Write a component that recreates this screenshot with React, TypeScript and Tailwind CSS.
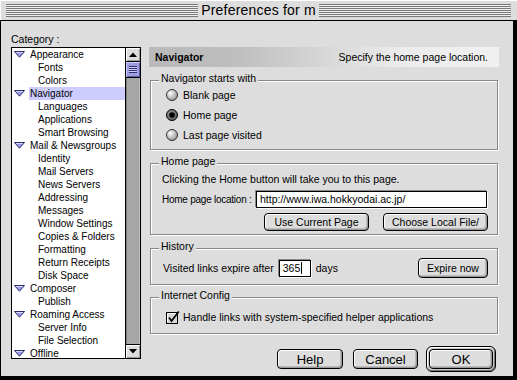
import React from "react";

type Item = { label: string; top?: boolean; selected?: boolean };

const items: Item[] = [
  { label: "Appearance", top: true },
  { label: "Fonts" },
  { label: "Colors" },
  { label: "Navigator", top: true, selected: true },
  { label: "Languages" },
  { label: "Applications" },
  { label: "Smart Browsing" },
  { label: "Mail & Newsgroups", top: true },
  { label: "Identity" },
  { label: "Mail Servers" },
  { label: "News Servers" },
  { label: "Addressing" },
  { label: "Messages" },
  { label: "Window Settings" },
  { label: "Copies & Folders" },
  { label: "Formatting" },
  { label: "Return Receipts" },
  { label: "Disk Space" },
  { label: "Composer", top: true },
  { label: "Publish" },
  { label: "Roaming Access", top: true },
  { label: "Server Info" },
  { label: "File Selection" },
  { label: "Offline", top: true },
];

function Tri() {
  return (
    <svg width="11" height="7" viewBox="0 0 11 7" className="shrink-0">
      <polygon points="0.5,0.5 10.5,0.5 5.5,6.2" fill="#9a9aee" stroke="#2e2e66" strokeWidth="1" />
      <line x1="2" y1="1.5" x2="9" y2="1.5" stroke="#d4d4ff" strokeWidth="1" />
    </svg>
  );
}

function Radio({ on }: { on?: boolean }) {
  return (
    <svg width="12" height="12" viewBox="0 0 12 12" className="shrink-0">
      <defs>
        <radialGradient id="rg" cx="35%" cy="35%" r="75%">
          <stop offset="0" stopColor="#ffffff" />
          <stop offset="1" stopColor="#8a8a8a" />
        </radialGradient>
        <radialGradient id="rgon" cx="35%" cy="35%" r="75%">
          <stop offset="0" stopColor="#9a9a9a" />
          <stop offset="1" stopColor="#555555" />
        </radialGradient>
      </defs>
      <circle cx="6" cy="6" r="5.5" fill={on ? "url(#rgon)" : "url(#rg)"} stroke={on ? "#000" : "#333"} strokeWidth="1" />
      {on && <circle cx="6" cy="6" r="2.8" fill="#000" />}
    </svg>
  );
}

function Check() {
  return (
    <svg width="14" height="13" viewBox="0 0 14 13" className="shrink-0">
      <rect x="0.5" y="1.5" width="11" height="11" fill="#d6d6d6" stroke="#000" />
      <line x1="1.5" y1="2.5" x2="10.5" y2="2.5" stroke="#fff" />
      <line x1="1.5" y1="2.5" x2="1.5" y2="11.5" stroke="#fff" />
      <path d="M3 6.5 L5.5 10 L12.8 0.5" stroke="#000" strokeWidth="1.7" fill="none" />
    </svg>
  );
}

function Group({ title, className, children }: { title: string; className?: string; children: React.ReactNode }) {
  return (
    <div className={`relative mx-[1px] border border-[#888] shadow-[1px_1px_0_#fff,inset_1px_1px_0_#fff] ${className ?? ""}`}>
      <span className="absolute left-[8px] -top-[9px] bg-[#dddddd] px-[2px] leading-[13px] whitespace-nowrap">{title}</span>
      {children}
    </div>
  );
}

function Btn({ children, className }: { children: React.ReactNode; className?: string }) {
  return (
    <div
      className={`flex items-center justify-center border border-black rounded-[4px] bg-[#dddddd] shadow-[inset_1px_1px_0_#fff,inset_-1px_-1px_0_#999,inset_-2px_-2px_0_#bbb] whitespace-nowrap ${className ?? ""}`}
    >
      {children}
    </div>
  );
}

function ArrowBox({ up }: { up?: boolean }) {
  return (
    <div className={`h-[13px] shrink-0 flex items-center justify-center bg-[#dddddd] shadow-[inset_1px_1px_0_#fff,inset_-1px_-1px_0_#999] ${up ? "border-b" : "border-t"} border-black box-content`}>
      <svg width="8" height="5" viewBox="0 0 8 5">
        {up ? <polygon points="0,5 8,5 4,0.5" fill="#000" /> : <polygon points="0,0 8,0 4,4.5" fill="#000" />}
      </svg>
    </div>
  );
}

export default function App() {
  return (
    <div className="w-[517px] h-[380px] bg-black overflow-hidden text-black font-['Liberation_Sans',Arial,sans-serif] text-[10.5px] leading-[13px]">
      {/* Title bar */}
      <div className="h-[21px] w-[517px] bg-[#dddddd] border-b border-black shadow-[inset_0_1px_0_#fff,inset_1px_0_0_#fff] flex items-center px-[6px]">
        <div className="flex-1 h-[13px] bg-[repeating-linear-gradient(to_bottom,#7a7a7a_0px,#7a7a7a_1px,#eeeeee_1px,#eeeeee_2px)]" />
        <div className="px-[3px] text-[14px] leading-[16px] tracking-[0.2px]">Preferences for m</div>
        <div className="flex-1 h-[13px] bg-[repeating-linear-gradient(to_bottom,#7a7a7a_0px,#7a7a7a_1px,#eeeeee_1px,#eeeeee_2px)]" />
      </div>

      {/* Body */}
      <div className="w-[513px] h-[355px] bg-[#dddddd] border-l border-black flex">
        {/* Left column */}
        <div className="w-[140px] shrink-0 pt-[12px] pl-[10px] flex flex-col">
          <div className="h-[13px] leading-[13px] text-[10.5px] mb-[1px]">Category :</div>
          <div className="w-[130px] h-[312px] border border-black bg-white flex overflow-hidden">
            <div className="w-[113px] shrink-0 overflow-hidden text-[10px]">
              {items.map((it) =>
                it.top ? (
                  <div key={it.label} className="h-[13px] flex items-center whitespace-nowrap">
                    <span className="ml-[2px] mr-[4px] flex items-center">
                      <Tri />
                    </span>
                    <span className={`pl-[1px] h-[13px] flex items-center ${it.selected ? "bg-[#ccccff] flex-1" : ""}`}>{it.label}</span>
                  </div>
                ) : (
                  <div key={it.label} className="h-[13px] flex items-center whitespace-nowrap pl-[26px]">
                    {it.label}
                  </div>
                )
              )}
            </div>
            {/* Scrollbar */}
            <div className="w-[15px] shrink-0 border-l border-black flex flex-col">
              <ArrowBox up />
              <div className="h-[16px] shrink-0 border-b border-black bg-[#9c9cde] shadow-[inset_1px_1px_0_#ccccff,inset_-1px_-1px_0_#5c5ca0] flex items-center justify-center">
                <div className="w-[8px] h-[7px] bg-[repeating-linear-gradient(to_bottom,#2e2e70_0px,#2e2e70_1px,#d0d0ff_1px,#d0d0ff_2px)]" />
              </div>
              <div className="flex-1 bg-[#a6a6a6] shadow-[inset_1px_0_0_#808080,inset_-1px_0_0_#bcbcbc]" />
              <ArrowBox />
            </div>
          </div>
        </div>

        {/* Right column */}
        <div className="w-[350px] ml-[8px] pt-[26px] flex flex-col">
          <div className="h-[20px] flex items-center justify-between pl-[6px] pr-[11px] bg-[linear-gradient(to_right,#b9b9b9_0%,#bebebe_25%,#ececec_72%,#f1f1f1_100%)]">
            <span className="font-bold">Navigator</span>
            <span>Specify the home page location.</span>
          </div>

          <Group title="Navigator starts with" className="mt-[13px] pt-[4px] pb-[4px] pl-[15px]">
            <div className="h-[20px] flex items-center gap-[5px]">
              <Radio />
              <span>Blank page</span>
            </div>
            <div className="h-[20px] flex items-center gap-[5px]">
              <Radio on />
              <span>Home page</span>
            </div>
            <div className="h-[20px] flex items-center gap-[5px]">
              <Radio />
              <span>Last page visited</span>
            </div>
          </Group>

          <Group title="Home page" className="mt-[13px] pt-[9px] pb-[3px] pl-[11px] pr-[9px]">
            <div className="h-[13px] whitespace-nowrap">Clicking the Home button will take you to this page.</div>
            <div className="mt-[5px] h-[17px] flex items-center">
              <span className="whitespace-nowrap text-[10px] tracking-[-0.25px]">Home page location :</span>
              <div className="ml-auto mr-[1px] w-[231px] h-[17px] bg-white border border-black shadow-[-1px_-1px_0_#888,1px_1px_0_#fff] flex items-center pl-[3px] whitespace-nowrap overflow-hidden">
                http://www.iwa.hokkyodai.ac.jp/
              </div>
            </div>
            <div className="mt-[5px] h-[18px] flex justify-end gap-[14px]">
              <Btn className="w-[105px] h-[18px]">Use Current Page</Btn>
              <Btn className="w-[105px] h-[18px]">Choose Local File/</Btn>
            </div>
          </Group>

          <Group title="History" className="mt-[13px] pt-[9px] pb-[6px] pl-[12px] pr-[9px]">
            <div className="h-[20px] flex items-center">
              <span className="whitespace-nowrap">Visited links expire after</span>
              <div className="ml-[5px] w-[32px] h-[17px] bg-white border border-black shadow-[-1px_-1px_0_#888,1px_1px_0_#fff] flex items-center pl-[3px]">
                365<span className="ml-[1px] w-[1px] h-[12px] bg-black" />
              </div>
              <span className="ml-[5px]">days</span>
              <Btn className="ml-auto w-[70px] h-[20px]">Expire now</Btn>
            </div>
          </Group>

          <Group title="Internet Config" className="mt-[12px] pt-[12px] pb-[9px] pl-[15px]">
            <div className="h-[14px] flex items-center gap-[3px]">
              <Check />
              <span className="whitespace-nowrap">Handle links with system-specified helper applications</span>
            </div>
          </Group>

          <div className="mt-[12px] h-[26px] flex items-center justify-end pr-[3px] text-[13px]">
            <Btn className="w-[66px] h-[20px]">Help</Btn>
            <Btn className="ml-[10px] w-[65px] h-[20px]">Cancel</Btn>
            <div className="ml-[8px] w-[70px] h-[26px] border border-black rounded-[6px] bg-[#c8c8c8] shadow-[inset_1px_1px_0_#fff,inset_-1px_-1px_0_#777] flex items-center justify-center">
              <Btn className="w-[64px] h-[20px]">OK</Btn>
            </div>
          </div>
        </div>
      </div>
    </div>
  );
}
